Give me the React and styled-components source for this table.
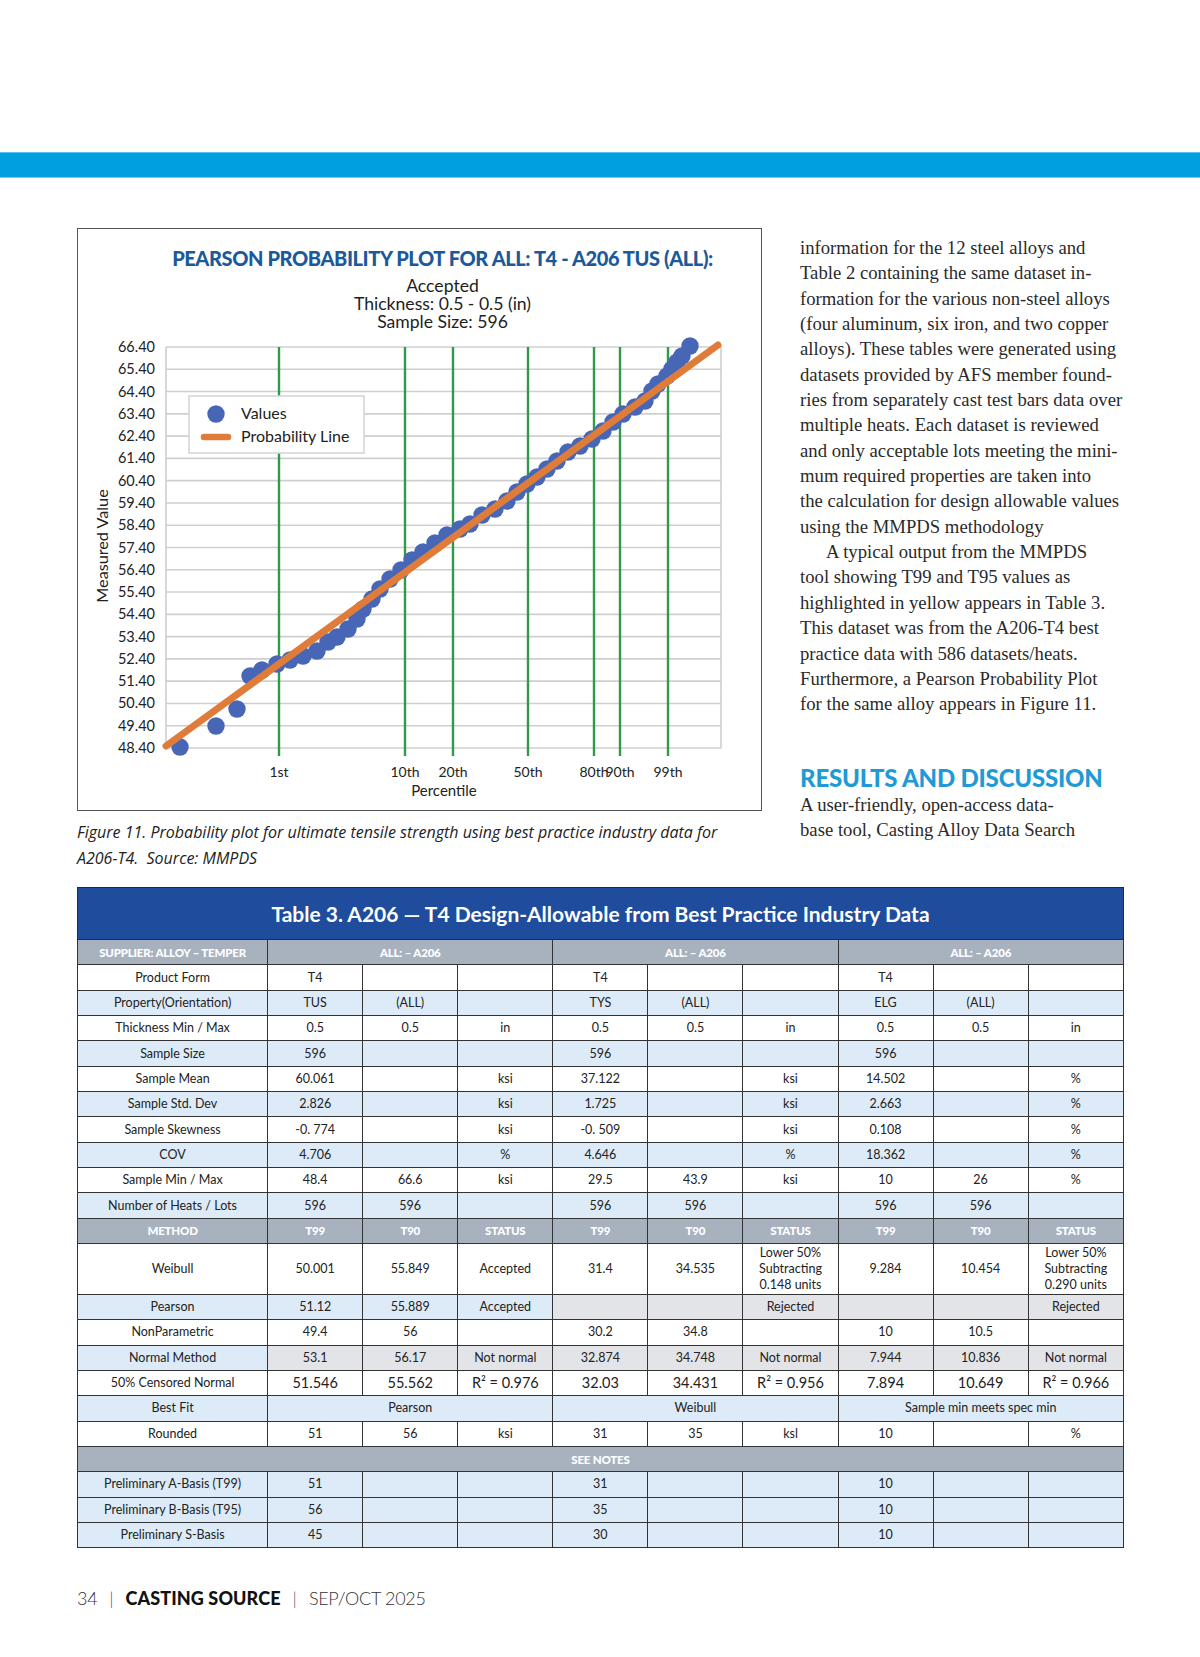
import React from "react";
import styled, { createGlobalStyle } from "styled-components";

const GlobalStyle = createGlobalStyle`
  html, body {
    margin: 0;
    padding: 0;
    background: #fff;
  }
  body {
    font-family: Lato, "Liberation Sans", sans-serif;
    color: #222;
  }
`;

// ---------- data ----------

const yTicks = [
  "66.40", "65.40", "64.40", "63.40", "62.40", "61.40", "60.40", "59.40", "58.40",
  "57.40", "56.40", "55.40", "54.40", "53.40", "52.40", "51.40", "50.40", "49.40", "48.40",
];

const percentiles = [
  { x: 279, t: "1st" },
  { x: 405, t: "10th" },
  { x: 453, t: "20th" },
  { x: 528, t: "50th" },
  { x: 594, t: "80th" },
  { x: 620, t: "90th" },
  { x: 668, t: "99th" },
];

// page coords of the plotted values
const points = [
  [180, 748], [216, 727], [237, 710], [250, 677], [262, 671], [277, 665], [290, 661],
  [303, 657], [317, 652], [328, 643], [337, 638], [348, 630], [357, 620], [363, 610],
  [372, 600], [380, 590], [390, 580], [401, 571], [412, 561], [423, 553], [435, 544],
  [447, 536], [460, 530], [470, 525], [482, 516], [495, 510], [507, 502], [517, 493],
  [527, 485], [537, 478], [547, 470], [557, 462], [568, 453], [580, 447], [592, 440],
  [603, 432], [613, 423], [623, 415], [635, 408], [645, 402], [652, 392], [658, 385],
  [667, 377], [672, 370], [677, 363], [682, 357], [690, 347],
];

const OX = 78;
const OY = 330;

const bodyLines = [
  "information for the 12 steel alloys and",
  "Table 2 containing the same dataset in-",
  "formation for the various non-steel alloys",
  "(four aluminum, six iron, and two copper",
  "alloys). These tables were generated using",
  "datasets provided by AFS member found-",
  "ries from separately cast test bars data over",
  "multiple heats. Each dataset is reviewed",
  "and only acceptable lots meeting the mini-",
  "mum required properties are taken into",
  "the calculation for design allowable values",
  "using the MMPDS methodology",
];

const bodyLines2 = [
  "A typical output from the MMPDS",
  "tool showing T99 and T95 values as",
  "highlighted in yellow appears in Table 3.",
  "This dataset was from the A206-T4 best",
  "practice data with 586 datasets/heats.",
  "Furthermore, a Pearson Probability Plot",
  "for the same alloy appears in Figure 11.",
];

const g = (t) => ({ t, tone: "gray" });

const rows = [
  { label: "Product Form", tone: "white", cells: ["T4", "", "", "T4", "", "", "T4", "", ""] },
  { label: "Property(Orientation)", tone: "blue", cells: ["TUS", "(ALL)", "", "TYS", "(ALL)", "", "ELG", "(ALL)", ""] },
  { label: "Thickness Min / Max", tone: "white", cells: ["0.5", "0.5", "in", "0.5", "0.5", "in", "0.5", "0.5", "in"] },
  { label: "Sample Size", tone: "blue", cells: ["596", "", "", "596", "", "", "596", "", ""] },
  { label: "Sample Mean", tone: "white", cells: ["60.061", "", "ksi", "37.122", "", "ksi", "14.502", "", "%"] },
  { label: "Sample Std. Dev", tone: "blue", cells: ["2.826", "", "ksi", "1.725", "", "ksi", "2.663", "", "%"] },
  { label: "Sample Skewness", tone: "white", cells: ["-0. 774", "", "ksi", "-0. 509", "", "ksi", "0.108", "", "%"] },
  { label: "COV", tone: "blue", cells: ["4.706", "", "%", "4.646", "", "%", "18.362", "", "%"] },
  { label: "Sample Min / Max", tone: "white", cells: ["48.4", "66.6", "ksi", "29.5", "43.9", "ksi", "10", "26", "%"] },
  { label: "Number of Heats / Lots", tone: "blue", cells: ["596", "596", "", "596", "596", "", "596", "596", ""] },
  { head: true, label: "METHOD", cells: ["T99", "T90", "STATUS", "T99", "T90", "STATUS", "T99", "T90", "STATUS"] },
  {
    label: "Weibull", tone: "white", tall: true,
    cells: ["50.001", "55.849", "Accepted", "31.4", "34.535", "Lower 50%\nSubtracting\n0.148 units", "9.284", "10.454", "Lower 50%\nSubtracting\n0.290 units"],
  },
  { label: "Pearson", tone: "blue", cells: ["51.12", "55.889", "Accepted", g(""), g(""), g("Rejected"), g(""), g(""), g("Rejected")] },
  { label: "NonParametric", tone: "white", cells: ["49.4", "56", "", "30.2", "34.8", "", "10", "10.5", ""] },
  {
    label: "Normal Method", tone: "blue",
    cells: [g("53.1"), g("56.17"), g("Not normal"), g("32.874"), g("34.748"), g("Not normal"), g("7.944"), g("10.836"), g("Not normal")],
  },
  {
    label: "50% Censored Normal", tone: "white", big: true,
    cells: ["51.546", "55.562", "R² = 0.976", "32.03", "34.431", "R² = 0.956", "7.894", "10.649", "R² = 0.966"],
  },
  {
    label: "Best Fit", tone: "blue",
    cells: [{ t: "Pearson", span: 3 }, { t: "Weibull", span: 3 }, { t: "Sample min meets spec min", span: 3 }],
  },
  { label: "Rounded", tone: "white", cells: ["51", "56", "ksi", "31", "35", "ksl", "10", "", "%"] },
  { notes: true },
  { label: "Preliminary A-Basis (T99)", tone: "blue", cells: ["51", "", "", "31", "", "", "10", "", ""] },
  { label: "Preliminary B-Basis (T95)", tone: "blue", cells: ["56", "", "", "35", "", "", "10", "", ""] },
  { label: "Preliminary S-Basis", tone: "blue", cells: ["45", "", "", "30", "", "", "10", "", ""] },
];

const tones = {
  white: "#ffffff",
  blue: "#dcebf7",
  gray: "#e3e4e8",
  head: "#a8b2bf",
};

// ---------- layout ----------

const Page = styled.div`
  width: 1200px;
  height: 1657px;
  padding-top: 152px;
  box-sizing: border-box;
  overflow: hidden;
`;

const Band = styled.div`
  height: 26px;
  box-sizing: border-box;
  background: #00a0e0;
  border-top: 1px solid #55c2ee;
  border-bottom: 1px solid #6fd0f2;
`;

const Main = styled.div`
  display: flex;
  gap: 38px;
  padding: 50px 0 0 77px;
`;

const ChartColumn = styled.div`
  width: 685px;
  flex: none;
`;

const ChartBox = styled.div`
  height: 583px;
  box-sizing: border-box;
  border: 1.5px solid #555;
  display: flex;
  flex-direction: column;
`;

const ChartHead = styled.div`
  margin-left: 87px;
  width: 555px;
  text-align: center;
  padding-top: 16px;
  height: 100px;
  box-sizing: border-box;
`;

const ChartTitle = styled.div`
  font-family: Lato, "Liberation Sans", sans-serif;
  font-weight: 900;
  font-size: 20px;
  letter-spacing: -0.4px;
  line-height: 26px;
  color: #1b5a9a;
  white-space: nowrap;
`;

const ChartSub = styled.div`
  font-family: Lato, "Liberation Sans", sans-serif;
  font-size: 17.6px;
  line-height: 18px;
  color: #1e1e1e;
  margin-top: ${(p) => (p.$first ? "6px" : "0")};
`;

const Plot = styled.svg`
  display: block;
  width: 682px;
  height: 480px;
`;

const Caption = styled.p`
  margin: 8px 0 0;
  font-family: "Open Sans", Lato, sans-serif;
  font-style: italic;
  font-size: 16px;
  line-height: 26px;
  color: #222;
  white-space: nowrap;
`;

const TextColumn = styled.div`
  width: 360px;
  padding-top: 7px;
  font-family: "Liberation Serif", "Times New Roman", serif;
  font-size: 18.7px;
  line-height: 25.35px;
  color: #2a2a2a;
`;

const Line = styled.span`
  display: block;
  white-space: nowrap;
  text-indent: ${(p) => (p.$indent ? "26px" : "0")};
`;

const Heading = styled.h2`
  margin: 47px 0 0;
  font-family: Lato, "Liberation Sans", sans-serif;
  font-weight: 900;
  font-size: 24px;
  line-height: 28px;
  letter-spacing: -0.2px;
  color: #1f9ad6;
  white-space: nowrap;
`;

const TableWrap = styled.div`
  margin: 16px 0 0 77px;
  width: 1047px;
`;

const Grid = styled.table`
  width: 1047px;
  border-collapse: collapse;
  table-layout: fixed;
  font-family: Lato, "Liberation Sans", sans-serif;
  color: #222;
`;

const TitleCell = styled.th`
  height: 51px;
  padding: 0;
  background: #1f4c9d;
  color: #fff;
  font-size: 21px;
  font-weight: 700;
  border: 1.5px solid #2b2b2b;
  text-align: center;
`;

const Row = styled.tr`
  height: ${(p) => (p.$tall ? 50.7 : 25.35)}px;
`;

const Cell = styled.td`
  padding: 0 2px;
  border: 1.5px solid #333;
  text-align: center;
  vertical-align: middle;
  white-space: pre-line;
  background: ${(p) => tones[p.$tone] || "#fff"};
  color: ${(p) => (p.$tone === "head" ? "#fff" : "#222")};
  font-size: ${(p) => (p.$tone === "head" ? "11.5px" : p.$big ? "14.5px" : "12.5px")};
  font-weight: ${(p) => (p.$tone === "head" ? 900 : 400)};
  line-height: ${(p) => (p.$tone === "head" ? "13px" : "16px")};
  letter-spacing: ${(p) => (p.$tone === "head" ? "-0.2px" : "0")};
`;

const Footer = styled.div`
  margin: 39px 0 0 77px;
  display: flex;
  align-items: center;
  gap: 12px;
  font-family: Lato, "Liberation Sans", sans-serif;
  font-size: 18px;
  line-height: 22px;
  color: #333;
`;

const FootLight = styled.span`
  font-weight: 300;
  letter-spacing: -0.3px;
`;

const FootBold = styled.span`
  font-weight: 900;
  color: #111;
  letter-spacing: 0.1px;
`;

const Pipe = styled.span`
  font-weight: 300;
  color: #555;
`;

// ---------- parts ----------

function ProbabilityPlot() {
  const left = 88;
  const right = 643;
  const top = 18;
  const step = (419 - 18) / 18;
  return (
    <Plot viewBox="0 0 682 480">
      {yTicks.map((v, i) => (
        <g key={v}>
          <line x1={left} x2={right} y1={top + i * step} y2={top + i * step} stroke="#cfcfcf" strokeWidth="1.6" />
          <text x={77} y={top + i * step + 5} textAnchor="end" fontSize="14.5" fill="#222" fontFamily="Lato, sans-serif">
            {v}
          </text>
        </g>
      ))}
      <line x1={left} x2={left} y1={top} y2={419} stroke="#cfcfcf" strokeWidth="1.6" />
      <line x1={right} x2={right} y1={top} y2={419} stroke="#cfcfcf" strokeWidth="1.6" />
      {percentiles.map((p) => (
        <g key={p.t}>
          <line x1={p.x - OX} x2={p.x - OX} y1={top} y2={427} stroke="#2e9b4a" strokeWidth="2.4" />
          <text x={p.x - OX} y={448} textAnchor="middle" fontSize="14" fill="#222" fontFamily="Lato, sans-serif">
            {p.t}
          </text>
        </g>
      ))}
      <text x={366} y={467} textAnchor="middle" fontSize="15" fill="#222" fontFamily="Lato, sans-serif">
        Percentile
      </text>
      <text
        x={0}
        y={0}
        transform="translate(30 217) rotate(-90)"
        textAnchor="middle"
        fontSize="16.2"
        fill="#222"
        fontFamily="Lato, sans-serif"
      >
        Measured Value
      </text>
      {points.map(([x, y], i) => (
        <circle key={i} cx={x - OX} cy={y - OY} r="8.7" fill="#4767b6" />
      ))}
      <line x1={88} y1={417} x2={640} y2={16} stroke="#e07c39" strokeWidth="7" strokeLinecap="round" />
      <rect x={111} y={67} width={175} height={57} fill="#fff" stroke="#d3d3d3" strokeWidth="1.5" />
      <circle cx={138} cy={85} r="8.7" fill="#4767b6" />
      <text x={163} y={90} fontSize="16" fill="#222" fontFamily="Lato, sans-serif">
        Values
      </text>
      <line x1={126} x2={150} y1={108} y2={108} stroke="#e07c39" strokeWidth="6.5" strokeLinecap="round" />
      <text x={163} y={113} fontSize="16" fill="#222" fontFamily="Lato, sans-serif">
        Probability Line
      </text>
    </Plot>
  );
}

function DataRow({ row }) {
  if (row.notes) {
    return (
      <Row>
        <Cell $tone="head" colSpan={10}>SEE NOTES</Cell>
      </Row>
    );
  }
  const base = row.head ? "head" : row.tone;
  return (
    <Row $tall={row.tall}>
      <Cell $tone={base}>{row.label}</Cell>
      {row.cells.map((c, i) => {
        const cell = typeof c === "string" ? { t: c } : c;
        return (
          <Cell key={i} $tone={cell.tone || base} $big={row.big} colSpan={cell.span || 1}>
            {cell.t}
          </Cell>
        );
      })}
    </Row>
  );
}

function DesignTable() {
  return (
    <TableWrap>
      <Grid>
        <colgroup>
          <col style={{ width: 190 }} />
          {Array.from({ length: 9 }).map((_, i) => (
            <col key={i} style={{ width: 95 }} />
          ))}
        </colgroup>
        <thead>
          <tr>
            <TitleCell colSpan={10}>Table 3. A206 — T4 Design-Allowable from Best Practice Industry Data</TitleCell>
          </tr>
        </thead>
        <tbody>
          <Row>
            <Cell $tone="head">SUPPLIER: ALLOY – TEMPER</Cell>
            <Cell $tone="head" colSpan={3}>ALL: – A206</Cell>
            <Cell $tone="head" colSpan={3}>ALL: – A206</Cell>
            <Cell $tone="head" colSpan={3}>ALL: – A206</Cell>
          </Row>
          {rows.map((r, i) => (
            <DataRow key={i} row={r} />
          ))}
        </tbody>
      </Grid>
    </TableWrap>
  );
}

export default function App() {
  return (
    <>
      <GlobalStyle />
      <Page>
        <Band />
        <Main>
          <ChartColumn>
            <ChartBox>
              <ChartHead>
                <ChartTitle>PEARSON PROBABILITY PLOT FOR ALL: T4 - A206 TUS (ALL):</ChartTitle>
                <ChartSub $first>Accepted</ChartSub>
                <ChartSub>Thickness: 0.5 - 0.5 (in)</ChartSub>
                <ChartSub>Sample Size: 596</ChartSub>
              </ChartHead>
              <ProbabilityPlot />
            </ChartBox>
            <Caption>
              Figure 11. Probability plot for ultimate tensile strength using best practice industry data for
              <br />
              A206-T4.&nbsp; Source: MMPDS
            </Caption>
          </ChartColumn>
          <TextColumn>
            {bodyLines.map((l) => (
              <Line key={l}>{l}</Line>
            ))}
            {bodyLines2.map((l, i) => (
              <Line key={l} $indent={i === 0}>
                {l}
              </Line>
            ))}
            <Heading>RESULTS AND DISCUSSION</Heading>
            <Line>A user-friendly, open-access data-</Line>
            <Line>base tool, Casting Alloy Data Search</Line>
          </TextColumn>
        </Main>
        <DesignTable />
        <Footer>
          <FootLight>34</FootLight>
          <Pipe>|</Pipe>
          <FootBold>CASTING SOURCE</FootBold>
          <Pipe>|</Pipe>
          <FootLight>SEP/OCT 2025</FootLight>
        </Footer>
      </Page>
    </>
  );
}
